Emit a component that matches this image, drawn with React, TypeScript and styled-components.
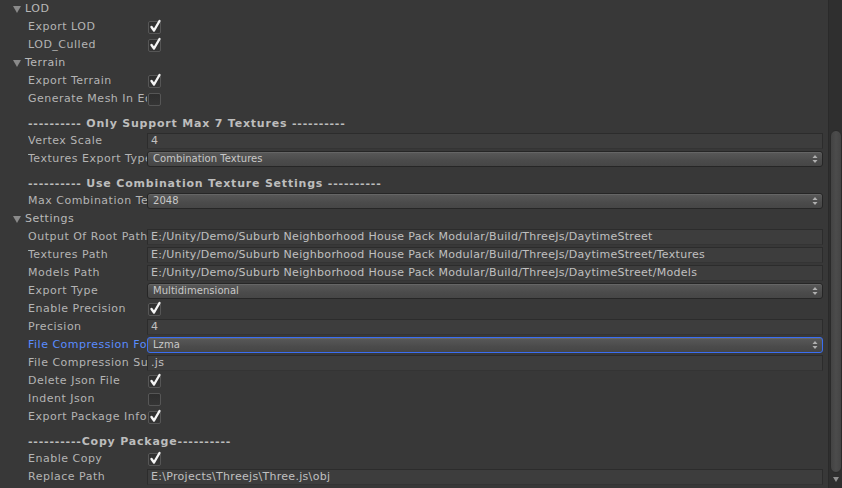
import React from "react";
import styled, { createGlobalStyle } from "styled-components";

const GlobalStyle = createGlobalStyle`
  html, body { margin: 0; padding: 0; background: #383838; overflow: hidden; }
  * { box-sizing: border-box; }
`;

const Inspector = styled.div`
  width: 842px;
  height: 488px;
  display: flex;
  background: #383838;
  font-family: "DejaVu Sans", "Liberation Sans", sans-serif;
  font-size: 11px;
  color: #b4b4b4;
`;

const Content = styled.div`
  flex: 1;
  display: flex;
  flex-direction: column;
  gap: 2px;
  padding: 1px 5px 0 0;
  overflow: hidden;
`;

const Row = styled.div<{ $indent?: number }>`
  display: grid;
  grid-template-columns: ${(p) => 147 - (p.$indent ?? 28)}px 1fr;
  height: 16px;
  padding-left: ${(p) => p.$indent ?? 28}px;
  align-items: center;
`;

const Label = styled.div<{ $focus?: boolean }>`
  white-space: nowrap;
  overflow: hidden;
  line-height: 16px;
  padding-right: 1px;
  color: ${(p) => (p.$focus ? "#5a8cff" : "#b4b4b4")};
  letter-spacing: 0.5px;
`;

const FoldRow = styled.div`
  display: flex;
  align-items: center;
  height: 16px;
  padding-left: 13px;
  gap: 4px;
  line-height: 16px;
  color: #b8b8b8;
  letter-spacing: 0.5px;
`;

const Header = styled.div`
  height: 14px;
  margin-top: 8px;
  padding-left: 28px;
  line-height: 14px;
  font-weight: bold;
  color: #bdbdbd;
  white-space: nowrap;
  letter-spacing: 0.8px;
`;

const TextField = styled.div`
  height: 16px;
  background: #3d3d3d;
  border: 1px solid #2c2c2c;
  border-bottom-color: #343434;
  padding: 0 3px;
  line-height: 14px;
  color: #c0c0c0;
  white-space: nowrap;
  overflow: hidden;
  letter-spacing: 0.3px;
`;

const Popup = styled.div<{ $focus?: boolean }>`
  height: 16px;
  border-radius: 3px;
  border: 1px solid ${(p) => (p.$focus ? "#3a6ef2" : "#262626")};
  background: linear-gradient(#595959, #4b4b4b 60%, #464646);
  box-shadow: inset 0 1px 0 rgba(255, 255, 255, 0.08);
  display: flex;
  align-items: center;
  justify-content: space-between;
  padding: 0 4px 1px 5px;
  font-size: 10px;
  color: #c8c8c8;
  letter-spacing: 0.05px;
`;

const Check = styled.div`
  width: 13px;
  height: 13px;
  margin-left: 1px;
  border-radius: 2px;
  border: 1px solid #565656;
  background: linear-gradient(#2e2e2e, #353535);
  position: relative;
`;

const CheckMark = styled.svg`
  position: absolute;
  left: 0px;
  top: -3px;
`;

const Scrollbar = styled.div`
  width: 14px;
  background: #2f2f2f;
  border-left: 1px solid #2a2a2a;
  display: flex;
  flex-direction: column;
  align-items: center;
  padding-top: 130px;
`;

const Thumb = styled.div`
  width: 12px;
  height: 343px;
  border-radius: 6px;
  background: linear-gradient(90deg, #434343, #4c4c4c 50%, #444444);
  border: 1px solid #2a2a2a;
`;

const ArrowDown = styled.div`
  margin-top: 4px;
  width: 0;
  height: 0;
  border-left: 3px solid transparent;
  border-right: 3px solid transparent;
  border-top: 5px solid #909090;
`;

const Tri = () => (
  <svg width="8" height="8" viewBox="0 0 8 8">
    <path d="M0 1 L8 1 L4 8 Z" fill="#8a8a8a" />
  </svg>
);

const Arrows = () => (
  <svg width="6" height="10" viewBox="0 0 6 10">
    <path d="M3 1 L5.5 4 L0.5 4 Z" fill="#b0b0b0" />
    <path d="M3 9 L5.5 6 L0.5 6 Z" fill="#b0b0b0" />
  </svg>
);

const Checkbox = ({ on }: { on?: boolean }) => (
  <Check>
    {on && (
      <CheckMark width="13" height="14" viewBox="0 0 13 14">
        <path d="M2.5 8 L5 11.5 L10.5 2" fill="none" stroke="#f4f4f4" strokeWidth="2.4" strokeLinecap="round" strokeLinejoin="round" />
      </CheckMark>
    )}
  </Check>
);

type Item =
  | { k: "fold"; t: string }
  | { k: "header"; t: string }
  | { k: "check"; l: string; on: boolean }
  | { k: "text"; l: string; v: string }
  | { k: "popup"; l: string; v: string; focus?: boolean };

const items: Item[] = [
  { k: "fold", t: "LOD" },
  { k: "check", l: "Export LOD", on: true },
  { k: "check", l: "LOD_Culled", on: true },
  { k: "fold", t: "Terrain" },
  { k: "check", l: "Export Terrain", on: true },
  { k: "check", l: "Generate Mesh In Editor", on: false },
  { k: "header", t: "---------- Only Support Max 7 Textures ----------" },
  { k: "text", l: "Vertex Scale", v: "4" },
  { k: "popup", l: "Textures Export Type", v: "Combination Textures" },
  { k: "header", t: "---------- Use Combination Texture Settings ----------" },
  { k: "popup", l: "Max Combination Texture Size", v: "2048" },
  { k: "fold", t: "Settings" },
  { k: "text", l: "Output Of Root Path", v: "E:/Unity/Demo/Suburb Neighborhood House Pack Modular/Build/ThreeJs/DaytimeStreet" },
  { k: "text", l: "Textures Path", v: "E:/Unity/Demo/Suburb Neighborhood House Pack Modular/Build/ThreeJs/DaytimeStreet/Textures" },
  { k: "text", l: "Models Path", v: "E:/Unity/Demo/Suburb Neighborhood House Pack Modular/Build/ThreeJs/DaytimeStreet/Models" },
  { k: "popup", l: "Export Type", v: "Multidimensional" },
  { k: "check", l: "Enable Precision", on: true },
  { k: "text", l: "Precision", v: "4" },
  { k: "popup", l: "File Compression Format", v: "Lzma", focus: true },
  { k: "text", l: "File Compression Suffix", v: ".js" },
  { k: "check", l: "Delete Json File", on: true },
  { k: "check", l: "Indent Json", on: false },
  { k: "check", l: "Export Package Info", on: true },
  { k: "header", t: "----------Copy Package----------" },
  { k: "check", l: "Enable Copy", on: true },
  { k: "text", l: "Replace Path", v: "E:\\Projects\\Threejs\\Three.js\\obj" },
];

export default function App() {
  return (
    <>
      <GlobalStyle />
      <Inspector>
        <Content>
          {items.map((it, i) => {
            if (it.k === "fold")
              return (
                <FoldRow key={i}>
                  <Tri />
                  <span>{it.t}</span>
                </FoldRow>
              );
            if (it.k === "header") return <Header key={i}>{it.t}</Header>;
            const focus = it.k === "popup" && it.focus;
            return (
              <Row key={i}>
                <Label $focus={focus}>{it.l}</Label>
                {it.k === "check" && <Checkbox on={it.on} />}
                {it.k === "text" && <TextField>{it.v}</TextField>}
                {it.k === "popup" && (
                  <Popup $focus={focus}>
                    <span>{it.v}</span>
                    <Arrows />
                  </Popup>
                )}
              </Row>
            );
          })}
        </Content>
        <Scrollbar>
          <Thumb />
          <ArrowDown />
        </Scrollbar>
      </Inspector>
    </>
  );
}
